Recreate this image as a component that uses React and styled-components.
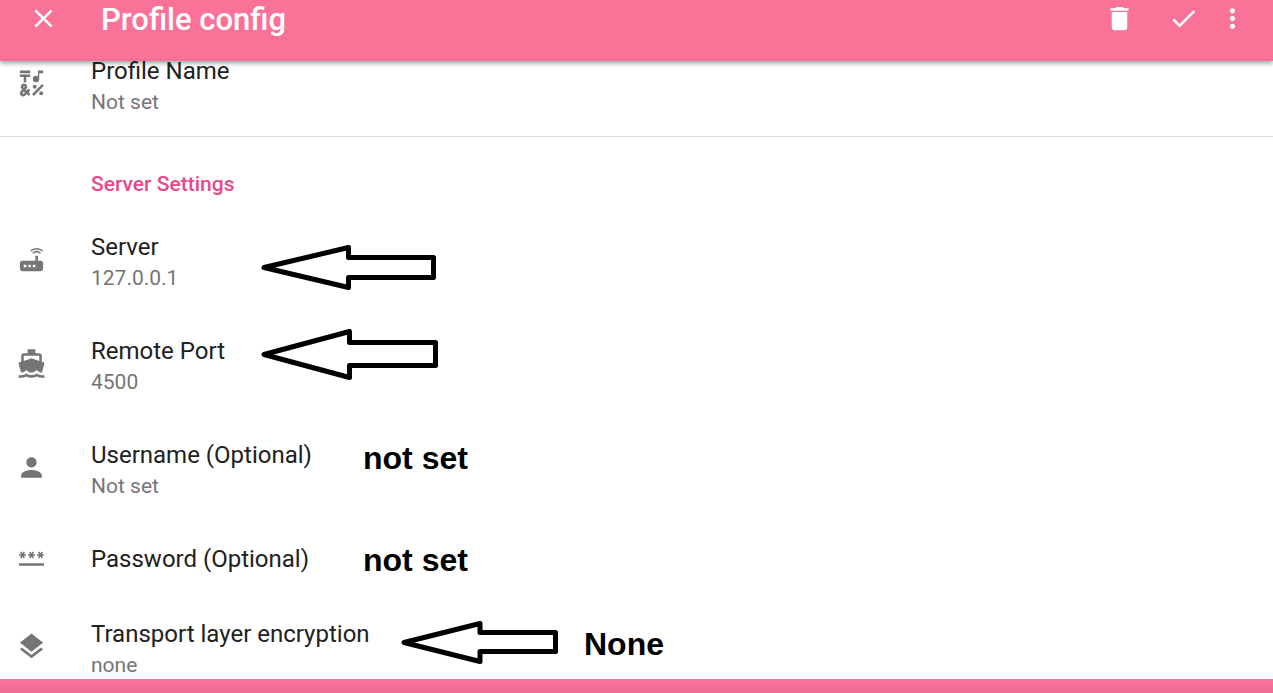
import React from "react";
import styled, { createGlobalStyle } from "styled-components";
import {
  MdCheck,
  MdClose,
  MdDelete,
  MdEmojiSymbols,
  MdLayers,
  MdMoreVert,
  MdPerson,
  MdRouter,
} from "react-icons/md";

const GlobalStyle = createGlobalStyle`
  *, *::before, *::after { box-sizing: border-box; }
  body {
    margin: 0;
    background: #fff;
    font-family: Roboto, sans-serif;
  }
`;

const Page = styled.div`
  display: flex;
  flex-direction: column;
  min-height: 100vh;
`;

const AppBar = styled.header`
  display: flex;
  align-items: flex-start;
  height: 61px;
  padding: 0 25px 0 28px;
  background: #fb7299;
  color: #fff;
  box-shadow: 0 2px 5px rgba(0, 0, 0, 0.4);
`;

const BarButton = styled.button`
  display: flex;
  justify-content: center;
  padding: 3px 0 0;
  border: 0;
  background: none;
  color: inherit;
  cursor: pointer;

  svg {
    width: 31px;
    height: 31px;
  }
`;

const Title = styled.h1`
  flex: 1;
  margin: 0 0 0 42px;
  font-size: 31px;
  font-weight: 500;
  line-height: 40px;
`;

const Actions = styled.div`
  display: flex;

  button + button { margin-left: 33px; }
  button + button:last-child { margin-left: 18px; }
`;

const Content = styled.main`
  flex: 1;
`;

const List = styled.ul`
  margin: 0;
  padding: 0;
  list-style: none;
`;

const Item = styled.li`
  position: relative;
`;

const Row = styled.button`
  display: flex;
  align-items: flex-start;
  width: 100%;
  min-height: 75px;
  padding: ${(p) => (p.$edge === "top" ? "0 0 24px 16px" : p.$edge === "bottom" ? "26px 0 4px 16px" : "26px 0 27px 16px")};
  border: 0;
  border-bottom: ${(p) => (p.$edge === "top" ? "1px solid #dedede" : "0")};
  background: none;
  font-family: inherit;
  text-align: left;
  cursor: pointer;
`;

const RowBody = styled.span`
  display: flex;
  align-items: center;
  gap: 44px;
`;

const RowIcon = styled.span`
  display: flex;
  height: 20px;
  align-items: center;
  padding-bottom: 6px;
  color: #757575;

  svg {
    flex: none;
    width: 31px;
    height: 31px;
  }
`;

const RowText = styled.span`
  display: flex;
  flex-direction: column;
  gap: 11px;
  line-height: 20px;
`;

const Label = styled.span`
  color: #212121;
  font-size: 24px;
`;

const Summary = styled.span`
  color: #757575;
  font-size: 21px;
`;

const SectionTitle = styled.h2`
  margin: 0;
  padding: 37px 0 17px 91px;
  color: #e8488a;
  font-size: 21px;
  font-weight: 500;
  line-height: 20px;
`;

const Arrow = styled.svg`
  position: absolute;
  top: ${(p) => p.$top}px;
  left: ${(p) => p.$left}px;
  fill: #fff;
  stroke: #000;
  stroke-width: 5;
  stroke-linejoin: round;
  pointer-events: none;
`;

const Note = styled.strong`
  position: absolute;
  top: ${(p) => p.$top}px;
  left: ${(p) => p.$left}px;
  color: #000;
  font: bold 32px/36px "Liberation Sans", Arial, sans-serif;
  pointer-events: none;
`;

const BottomBar = styled.footer`
  height: 14px;
  background: linear-gradient(#fb7299, #ed6c91);
`;

function BoatIcon(props) {
  return (
    <svg viewBox="0 0 24 24" fill="currentColor" {...props}>
      <path d="M20 21c-1.390 0-2.780-.47-4-1.320-2.440 1.710-5.560 1.710-8 0C6.780 20.530 5.390 21 4 21H2v2h2c1.380 0 2.740-.35 4-.99 2.520 1.290 5.480 1.290 8 0 1.260.65 2.620.99 4 .99h2v-2h-2zM3.950 19H4c1.600 0 3.020-.88 4-2 .98 1.120 2.400 2 4 2s3.020-.88 4-2c.98 1.120 2.400 2 4 2h.05l1.890-6.680c.08-.26.06-.54-.06-.78s-.34-.42-.6-.5L20 10.620V6c0-1.100-.9-2-2-2h-3V1H9v3H6c-1.100 0-2 .9-2 2v4.620l-1.290.42c-.26.08-.48.26-.6.5s-.15.52-.06.78L3.950 19zM6 6h12v3.970L12 8 6 9.970V6z" />
    </svg>
  );
}

function PasswordIcon(props) {
  return (
    <svg viewBox="0 0 31 31" fill="none" stroke="currentColor" {...props}>
      {[6.5, 15.5, 24.5].map((x) => (
        <path key={x} strokeWidth="1.5" d={`M${x - 3.5} 14h7M${x - 1.8} 11l3.600 6M${x + 1.8} 11l-3.600 6`} />
      ))}
      <path strokeWidth="2.5" d="M3 23.500h25" />
    </svg>
  );
}

function Preference({ icon: Icon, label, summary, edge, children }) {
  return (
    <Item>
      <Row type="button" $edge={edge}>
        <RowBody>
          <RowIcon><Icon aria-hidden="true" /></RowIcon>
          <RowText>
            <Label>{label}</Label>
            {summary && <Summary>{summary}</Summary>}
          </RowText>
        </RowBody>
      </Row>
      {children}
    </Item>
  );
}

export default function App() {
  return (
    <Page>
      <GlobalStyle />
      <AppBar>
        <BarButton aria-label="Close"><MdClose /></BarButton>
        <Title>Profile config</Title>
        <Actions>
          <BarButton aria-label="Delete"><MdDelete /></BarButton>
          <BarButton aria-label="Apply"><MdCheck /></BarButton>
          <BarButton aria-label="More options"><MdMoreVert /></BarButton>
        </Actions>
      </AppBar>
      <Content>
        <List>
          <Preference icon={MdEmojiSymbols} label="Profile Name" summary="Not set" edge="top" />
        </List>
        <SectionTitle>Server Settings</SectionTitle>
        <List>
          <Preference icon={MdRouter} label="Server" summary="127.0.0.1">
            <Arrow $top={34} $left={261} width="176" height="46" aria-hidden="true">
              <path d="M3 22.500 87.500 2.500V12.500H172.500V32.500H87.500V42.500Z" />
            </Arrow>
          </Preference>
          <Preference icon={BoatIcon} label="Remote Port" summary="4500">
            <Arrow $top={14} $left={261} width="178" height="52" aria-hidden="true">
              <path d="M3 25.500 88.500 2.500V13.500H174.500V36.500H88.500V48.500Z" />
            </Arrow>
          </Preference>
          <Preference icon={MdPerson} label="Username (Optional)" summary="Not set">
            <Note $top={21} $left={363}>not set</Note>
          </Preference>
          <Preference icon={PasswordIcon} label="Password (Optional)">
            <Note $top={19} $left={363}>not set</Note>
          </Preference>
          <Preference icon={MdLayers} label="Transport layer encryption" summary="none" edge="bottom">
            <Arrow $top={23} $left={401} width="158" height="44" aria-hidden="true">
              <path d="M3 21.500 79 2.500V11.500H154.500V30.500H79V40.500Z" />
            </Arrow>
            <Note $top={28} $left={584}>None</Note>
          </Preference>
        </List>
      </Content>
      <BottomBar />
    </Page>
  );
}
